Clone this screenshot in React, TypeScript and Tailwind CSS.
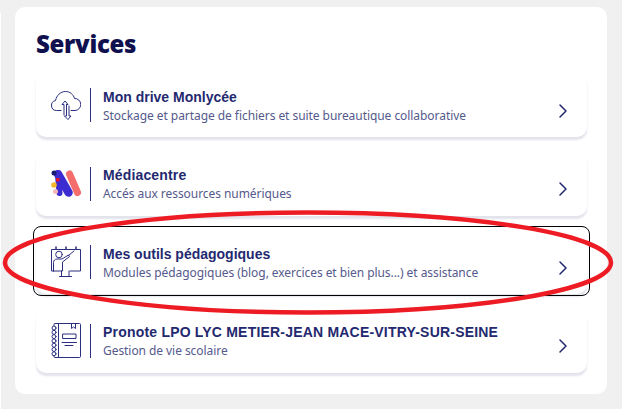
import * as React from "react";
import { ChevronRight } from "lucide-react";

const stroke = "#2a2f7f";

const CloudIcon = () => (
  <svg width="30" height="29" viewBox="0 0 30 29" fill="none" stroke={stroke} strokeWidth="1" strokeLinejoin="round" strokeLinecap="round">
    <path d="M10 19.500H5.500a5 5 0 0 1-1-9.900C5.500 4.500 9.500.5 14.500.5c4.500 0 8 3 9 7a6 6 0 0 1 .5 12h-4" />
    <path d="M13 24V13.500h-2l3-3.500 3 3.500h-1.500" />
    <path d="M15.500 13.500V25h-2l3.500 3.500 3-3.500h-2V15" />
  </svg>
);

const MediaIcon = () => (
  <svg width="30" height="27" viewBox="0 0 30 27" fill="none">
    <path d="M18.500 4 L26.500 22.500" stroke="#f56d6d" strokeWidth="7" strokeLinecap="round" />
    <path d="M7 4 L17.500 22.500" stroke="#3b2bd0" strokeWidth="8.500" strokeLinecap="round" />
    <path d="M7 5 L8.500 23" stroke="#3b2bd0" strokeWidth="6" strokeLinecap="round" />
    <circle cx="3" cy="3" r="2.500" fill="#1a1a6e" />
    <rect x="5" y="8" width="3.500" height="3.500" fill="#e0102f" />
    <circle cx="3" cy="15" r="2.800" fill="#f5b82e" />
    <circle cx="4.500" cy="21.500" r="2.500" fill="#f3b7b7" />
  </svg>
);

const TeacherIcon = () => (
  <svg width="30" height="32" viewBox="0 0 30 32" fill="none" stroke={stroke} strokeWidth="1" strokeLinecap="round" strokeLinejoin="round">
    <path d="M19 25H29.500V3.500H.5V25H2.500" />
    <path d="M5 3V1M15 3V1M25 3V1" strokeWidth="1.500" />
    <circle cx="8" cy="8.500" r="3.300" />
    <path d="M2.500 25V16.500c0-2 1.500-3.500 3.500-3.500h5l6.500-4 1 1.500-7 5.500V25H2.500" />
    <path d="M10.500 25v5.500M18 25v5.500M8.500 30.500h12" />
    <path d="M17.500 9.500L23 5" />
  </svg>
);

const NotebookIcon = () => (
  <svg width="30" height="35" viewBox="0 0 30 35" fill="none" stroke={stroke} strokeWidth="1" strokeLinecap="round" strokeLinejoin="round">
    <path d="M3 2.500V1.500a1 1 0 0 1 1-1h24.500a1 1 0 0 1 1 1v32a1 1 0 0 1-1 1H4a1 1 0 0 1-1-1v-1" />
    <path d="M7.500 .5V34.500" />
    <path d="M20.500 .5V5.500l2-1.500 2 1.500V.5" />
    <rect x="12" y="11" width="13" height="4.500" />
    <path d="M11 19.500h14.500M14 22.500h8" />
    <circle cx="3" cy="5" r="2" />
    <circle cx="3" cy="9.300" r="2" />
    <circle cx="3" cy="13.600" r="2" />
    <circle cx="3" cy="17.900" r="2" />
    <circle cx="3" cy="22.200" r="2" />
    <circle cx="3" cy="26.500" r="2" />
    <circle cx="3" cy="30.800" r="2" />
  </svg>
);

const services = [
  { icon: <CloudIcon />, title: "Mon drive Monlycée", titleClass: "", text: "Stockage et partage de fichiers et suite bureautique collaborative" },
  { icon: <MediaIcon />, title: "Médiacentre", titleClass: "tracking-[0.15px]", text: "Accés aux ressources numériques" },
  { icon: <TeacherIcon />, title: "Mes outils pédagogiques", titleClass: "", text: "Modules pédagogiques (blog, exercices et bien plus...) et assistance", focused: true },
  { icon: <NotebookIcon />, title: "Pronote LPO LYC METIER-JEAN MACE-VITRY-SUR-SEINE", titleClass: "tracking-[0.2px]", text: "Gestion de vie scolaire" },
];

export default function App() {
  return (
    <div className="relative h-[409px] w-[622px] overflow-hidden bg-[#f0f0f0] font-['Noto_Sans',sans-serif]">
      <div className="flex pt-[7px]">
        <div className="mt-[6px] h-[396px] w-px bg-white" />
        <div className="ml-[14px] h-[387px] w-[592px] rounded-[10px] bg-white pt-[21px] pr-5 pl-[21px]">
          <h1 className="font-['Open_Sans',sans-serif] text-[24px] leading-[32px] font-extrabold tracking-[-0.3px] text-[#10104f]">
            Services
          </h1>
          <div className="mt-[13px] flex flex-col gap-[14.67px]">
            {services.map((s) => (
              <div
                key={s.title}
                className="relative flex h-16 items-center rounded-[10px] bg-white pr-3 pl-[15px] shadow-[0_3px_2px_rgba(60,60,120,0.14)]"
              >
                {s.focused && (
                  <div className="absolute -top-[4px] -right-[3px] -bottom-[2px] -left-[3px] rounded-[8px] border border-black" />
                )}
                <div className="flex w-[30px] shrink-0 items-center justify-center">{s.icon}</div>
                <div className="ml-[9px] h-[34px] w-px shrink-0 bg-[#2a2f7f]" />
                <div className="ml-3 min-w-0 flex-1 pt-px">
                  <div className={`font-['Liberation_Sans',sans-serif] text-[14px] leading-[18px] font-bold whitespace-nowrap text-[#24296f] ${s.titleClass}`}>
                    {s.title}
                  </div>
                  <div className="mt-[2px] text-[12px] leading-[16px] tracking-[-0.06px] whitespace-nowrap text-[#555a8c]">
                    {s.text}
                  </div>
                </div>
                <ChevronRight className="mt-[11px] h-6 w-6 shrink-0 text-[#24296f]" strokeWidth={1.5} />
              </div>
            ))}
          </div>
        </div>
      </div>
      <svg className="pointer-events-none absolute top-0 left-0" width="622" height="409" viewBox="0 0 622 409" fill="none">
        <ellipse cx="308" cy="262.500" rx="303" ry="50" stroke="#ed1c24" strokeWidth="4.500" />
      </svg>
    </div>
  );
}
